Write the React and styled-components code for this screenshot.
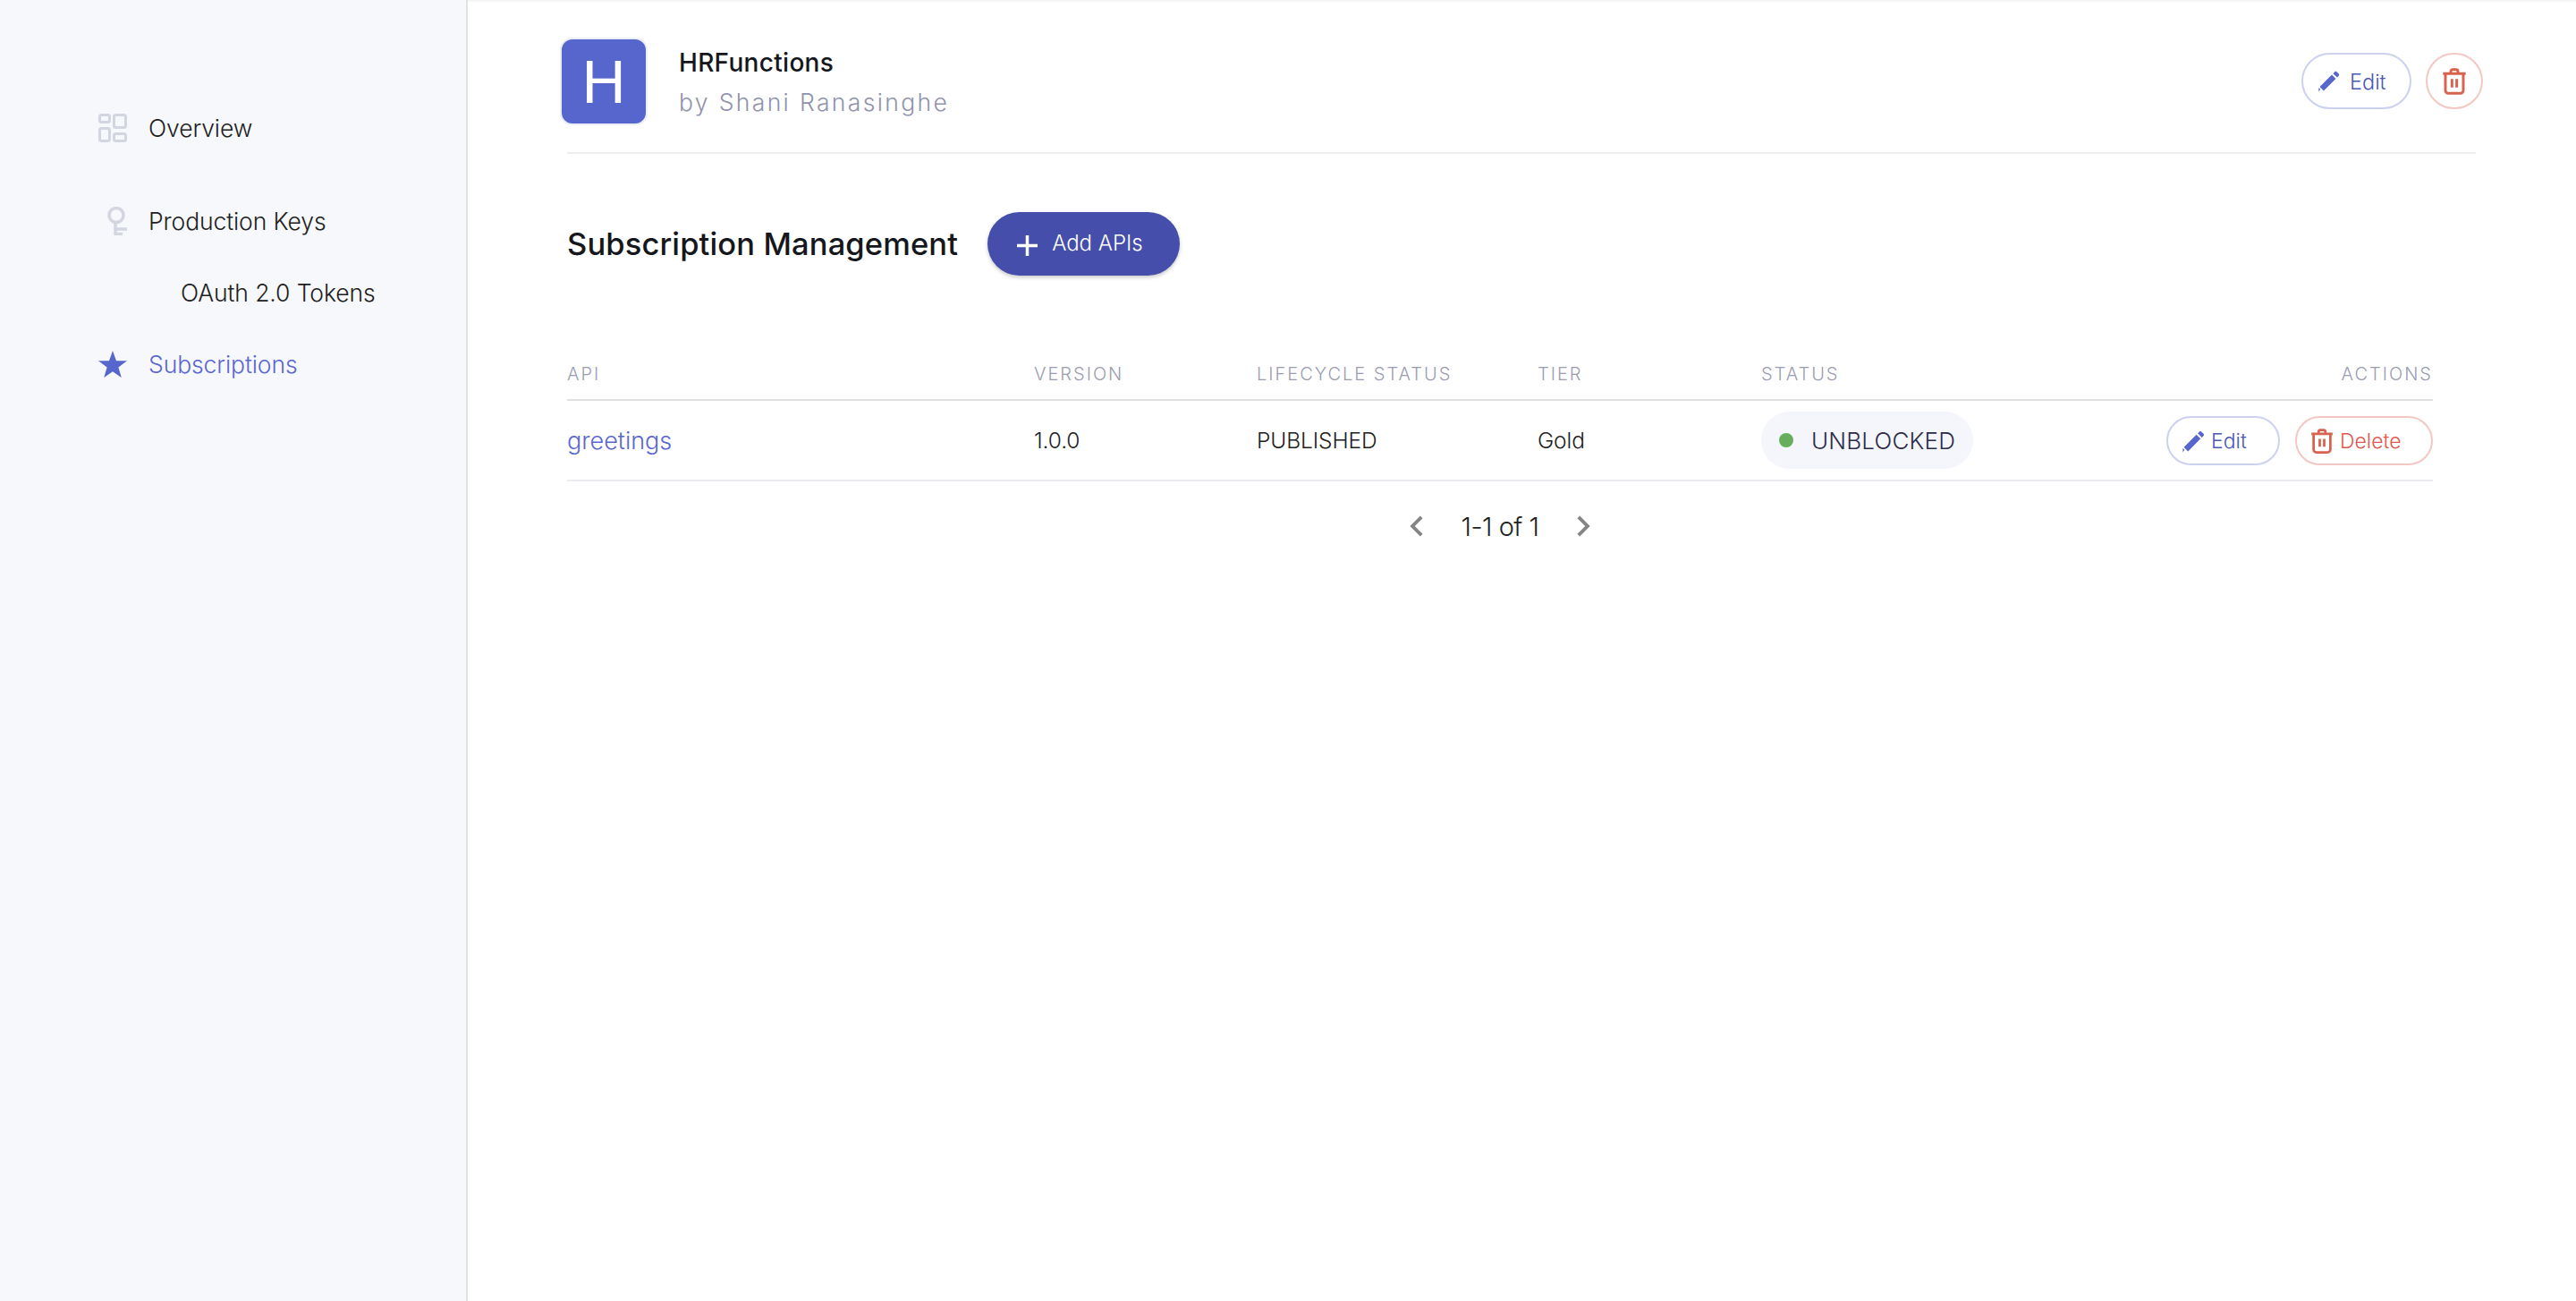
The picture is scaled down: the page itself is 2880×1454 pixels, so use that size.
import React from "react";
import styled, {createGlobalStyle} from "styled-components";

const GlobalStyle = createGlobalStyle`
  html, body {
    margin: 0;
    padding: 0;
    background: white;
    font-family: Inter, "Liberation Sans", sans-serif;
  }
`;

const Page = styled.div`
  display: flex;
  width: 2880px;
  height: 1454px;
  overflow: hidden;
`;

const Sidebar = styled.nav`
  width: 523px;
  flex: none;
  padding-top: 103px;
  box-sizing: border-box;
  background-color: #f7f8fc;
  border-right: 2px solid #e2e2e4;
`;

const NavItem = styled.div`
  display: flex;
  align-items: center;
  height: 80px;
  margin-bottom: ${({$gap}) => $gap || 0}px;
  padding-left: ${({$sub}) => ($sub ? 202 : 110)}px;
  font-size: 26.5px;
  letter-spacing: -0.1px;
  font-weight: 300;
  color: ${({$active}) => ($active ? "#5a67d0" : "#212121")};
`;

const NavIcon = styled.span`
  display: flex;
  justify-content: center;
  width: 32px;
  margin-right: 24px;
`;

const Main = styled.main`
  flex: 1;
  padding: 0 112px 0 111px;
  box-shadow: inset 0 3px 3px -2px #eeeeee;
`;

const AppHeader = styled.header`
  display: flex;
  align-items: center;
  height: 172px;
  padding-top: 10px;
  box-sizing: border-box;
  border-bottom: 2px solid #eeeeee;
`;

const Avatar = styled.div`
  display: flex;
  align-items: center;
  justify-content: center;
  width: 94px;
  height: 94px;
  margin: 2px 0 0 -8px;
  border: 2px solid #eceef8;
  border-radius: 14px;
  background-color: #5766cd;
  color: white;
  font-family: "Liberation Sans", sans-serif;
  font-size: 68px;
`;

const AppTitles = styled.div`
  margin: 3px 0 0 35px;
  flex: 1;
`;

const AppName = styled.div`
  font-size: 28px;
  line-height: 36px;
  font-weight: 500;
  letter-spacing: 0.3px;
  color: #15171c;
`;

const AppOwner = styled.div`
  margin-top: 8px;
  font-size: 26.5px;
  line-height: 36px;
  font-weight: 300;
  letter-spacing: 2.35px;
  color: #8f93ab;
`;

const HeaderActions = styled.div`
  display: flex;
  gap: 16px;
  margin-right: -8px;
`;

const OutlineButton = styled.button`
  display: flex;
  align-items: center;
  justify-content: ${({$pad}) => ($pad ? "flex-start" : "center")};
  gap: ${({$gap}) => $gap || 8}px;
  box-sizing: border-box;
  width: ${({$width}) => $width}px;
  height: ${({$height}) => $height}px;
  padding: 2px 0 0 ${({$pad}) => $pad || 0}px;
  background: white;
  border: 2px solid ${({$danger}) => ($danger ? "#f3c8c4" : "#cdd1f0")};
  border-radius: 40px;
  color: ${({$danger}) => ($danger ? "#e0584f" : "#4b57b8")};
  font-family: inherit;
  font-size: ${({$size}) => $size || 23}px;
  font-weight: 300;
`;

const TitleRow = styled.div`
  display: flex;
  align-items: center;
  margin-top: 65px;
  height: 71px;
`;

const Title = styled.h1`
  margin: 0 33px 0 0;
  font-size: 34.5px;
  font-weight: 500;
  letter-spacing: 0.12px;
  color: #15171c;
`;

const AddButton = styled.button`
  display: flex;
  align-items: center;
  gap: 16px;
  box-sizing: border-box;
  width: 215px;
  height: 71px;
  padding: 0 0 3px 33px;
  border: none;
  border-radius: 36px;
  background-color: #454fab;
  box-shadow: 0 2px 4px rgba(0, 0, 0, 0.22);
  color: white;
  font-family: inherit;
  font-size: 24px;
  font-weight: 300;
`;

const PlusIcon = styled.svg`
  margin-top: 6px;
  flex: none;
`;

const Table = styled.div`
  width: 2086px;
  margin-top: 90px;
`;

const Row = styled.div`
  display: grid;
  grid-template-columns: 522px 249px 314px 250px 1fr auto;
  align-items: center;
`;

const HeadRow = styled(Row)`
  height: 50px;
  padding-bottom: 8px;
  box-sizing: border-box;
  border-bottom: 2px solid #e0e0e0;
`;

const BodyRow = styled(Row)`
  height: 90px;
  box-sizing: border-box;
  border-bottom: 2px solid #ececf0;
`;

const HeadCell = styled.div`
  font-size: 20px;
  font-weight: 300;
  letter-spacing: 2px;
  color: #9a9cb0;
  text-align: ${({$right}) => ($right ? "right" : "left")};
`;

const Cell = styled.div`
  font-size: 24.5px;
  font-weight: 300;
  letter-spacing: -0.1px;
  color: #212121;
`;

const ApiLink = styled.a`
  font-size: 27px;
  font-weight: 300;
  color: #5a67d0;
`;

const StatusChip = styled.div`
  display: inline-flex;
  align-items: center;
  box-sizing: border-box;
  width: 237px;
  height: 64px;
  padding-left: 20px;
  border-radius: 32px;
  background-color: #f5f6fb;
  color: #2c2c48;
  font-size: 26px;
  font-weight: 300;
  letter-spacing: 0.2px;
`;

const StatusDot = styled.span`
  width: 16px;
  height: 16px;
  margin-right: 20px;
  border-radius: 50%;
  background-color: #66ae5b;
`;

const RowActions = styled.div`
  display: flex;
  gap: 17px;
`;

const Pagination = styled.div`
  display: flex;
  align-items: center;
  justify-content: center;
  gap: 27px;
  height: 46px;
  margin-top: 27px;
  font-size: 29px;
  font-weight: 300;
  letter-spacing: -0.5px;
  color: #212121;
`;

const ChevronSvg = styled.svg`
  transform: ${({$flip}) => ($flip ? "scaleX(-1)" : "none")};
`;

const PenIcon = ({size}) => (
  <svg width={size} height={size} viewBox="0 0 24 24" fill="#5766cd">
    <path d="M2 22v-4l1.600 1.600L2 22zM3 17.200L14.600 5.600l3.800 3.800L6.800 21 3 17.200zM15.800 4.400l1.600-1.600c.5-.5 1.300-.5 1.800 0l2 2c.5.5.5 1.300 0 1.800l-1.600 1.600-3.800-3.800z" />
  </svg>
);

const TrashIcon = ({size}) => (
  <svg width={size} height={size} viewBox="0 0 24 24" fill="none" stroke="#d6624f" strokeWidth="2.2">
    <path d="M2.500 5.500h19M9 5V3.500C9 2.700 9.700 2 10.500 2h3c.8 0 1.500.7 1.500 1.500V5M4.500 5.500v14c0 1.400 1.100 2.500 2.500 2.500h10c1.400 0 2.500-1.100 2.500-2.500v-14M10 10v7M14 10v7" />
  </svg>
);

const Chevron = ({flip}) => (
  <ChevronSvg $flip={flip} width="46" height="46" viewBox="0 0 24 24" fill="#858585">
    <path d="M15.410 7.410L14 6l-6 6 6 6 1.410-1.410L10.830 12z" />
  </ChevronSvg>
);

const OverviewIcon = () => (
  <svg width="32" height="32" viewBox="0 0 32 32" fill="none" stroke="#d3d5e1" strokeWidth="3">
    <rect x="1.500" y="1.500" width="11" height="8" rx="2" />
    <rect x="17.500" y="1.500" width="13" height="14" rx="2" />
    <rect x="1.500" y="16.500" width="11" height="14" rx="2" />
    <rect x="17.500" y="22.500" width="13" height="8" rx="2" />
  </svg>
);

const KeyIcon = () => (
  <svg width="22" height="32" viewBox="0 0 22 32" fill="none" stroke="#d3d5e1" strokeWidth="3.500" style={{marginLeft: 9}}>
    <circle cx="10" cy="9.500" r="8" />
    <path d="M9 17v13.500h8M9 25h13" />
  </svg>
);

const StarIcon = () => (
  <svg width="32" height="30" viewBox="0 0 32 30" fill="#5766cd">
    <path d="M16 0l4 11.200h12l-9.600 7.200 3.400 11.600L16 23.200 6.200 30l3.400-11.600L0 11.200h12z" />
  </svg>
);

const columns = ["API", "VERSION", "LIFECYCLE STATUS", "TIER", "STATUS"];

export default function App() {
  return (
    <Page>
      <GlobalStyle />
      <Sidebar>
        <NavItem $gap={24}>
          <NavIcon><OverviewIcon /></NavIcon>
          Overview
        </NavItem>
        <NavItem>
          <NavIcon><KeyIcon /></NavIcon>
          Production Keys
        </NavItem>
        <NavItem $sub>OAuth 2.0 Tokens</NavItem>
        <NavItem $active>
          <NavIcon><StarIcon /></NavIcon>
          Subscriptions
        </NavItem>
      </Sidebar>
      <Main>
        <AppHeader>
          <Avatar>H</Avatar>
          <AppTitles>
            <AppName>HRFunctions</AppName>
            <AppOwner>by Shani Ranasinghe</AppOwner>
          </AppTitles>
          <HeaderActions>
            <OutlineButton $width={123} $height={63} $size={23.5} $pad={15} $gap={9}>
              <PenIcon size={28} />
              Edit
            </OutlineButton>
            <OutlineButton $width={64} $height={63} $danger>
              <TrashIcon size={32} />
            </OutlineButton>
          </HeaderActions>
        </AppHeader>
        <TitleRow>
          <Title>Subscription Management</Title>
          <AddButton>
            <PlusIcon width="23" height="23" viewBox="0 0 23 23" stroke="white" strokeWidth="3.500">
              <path d="M11.500 0v23M0 11.500h23" />
            </PlusIcon>
            Add APIs
          </AddButton>
        </TitleRow>
        <Table>
          <HeadRow>
            {columns.map(column => (
              <HeadCell key={column}>{column}</HeadCell>
            ))}
            <HeadCell $right>ACTIONS</HeadCell>
          </HeadRow>
          <BodyRow>
            <ApiLink>greetings</ApiLink>
            <Cell>1.0.0</Cell>
            <Cell>PUBLISHED</Cell>
            <Cell>Gold</Cell>
            <div>
              <StatusChip>
                <StatusDot />
                UNBLOCKED
              </StatusChip>
            </div>
            <RowActions>
              <OutlineButton $width={127} $height={55} $size={23} $pad={14} $gap={5}>
                <PenIcon size={29} />
                Edit
              </OutlineButton>
              <OutlineButton $width={154} $height={55} $size={23} $pad={13} $gap={5} $danger>
                <TrashIcon size={30} />
                Delete
              </OutlineButton>
            </RowActions>
          </BodyRow>
          <Pagination>
            <Chevron />
            <span>1-1 of 1</span>
            <Chevron flip />
          </Pagination>
        </Table>
      </Main>
    </Page>
  );
}
